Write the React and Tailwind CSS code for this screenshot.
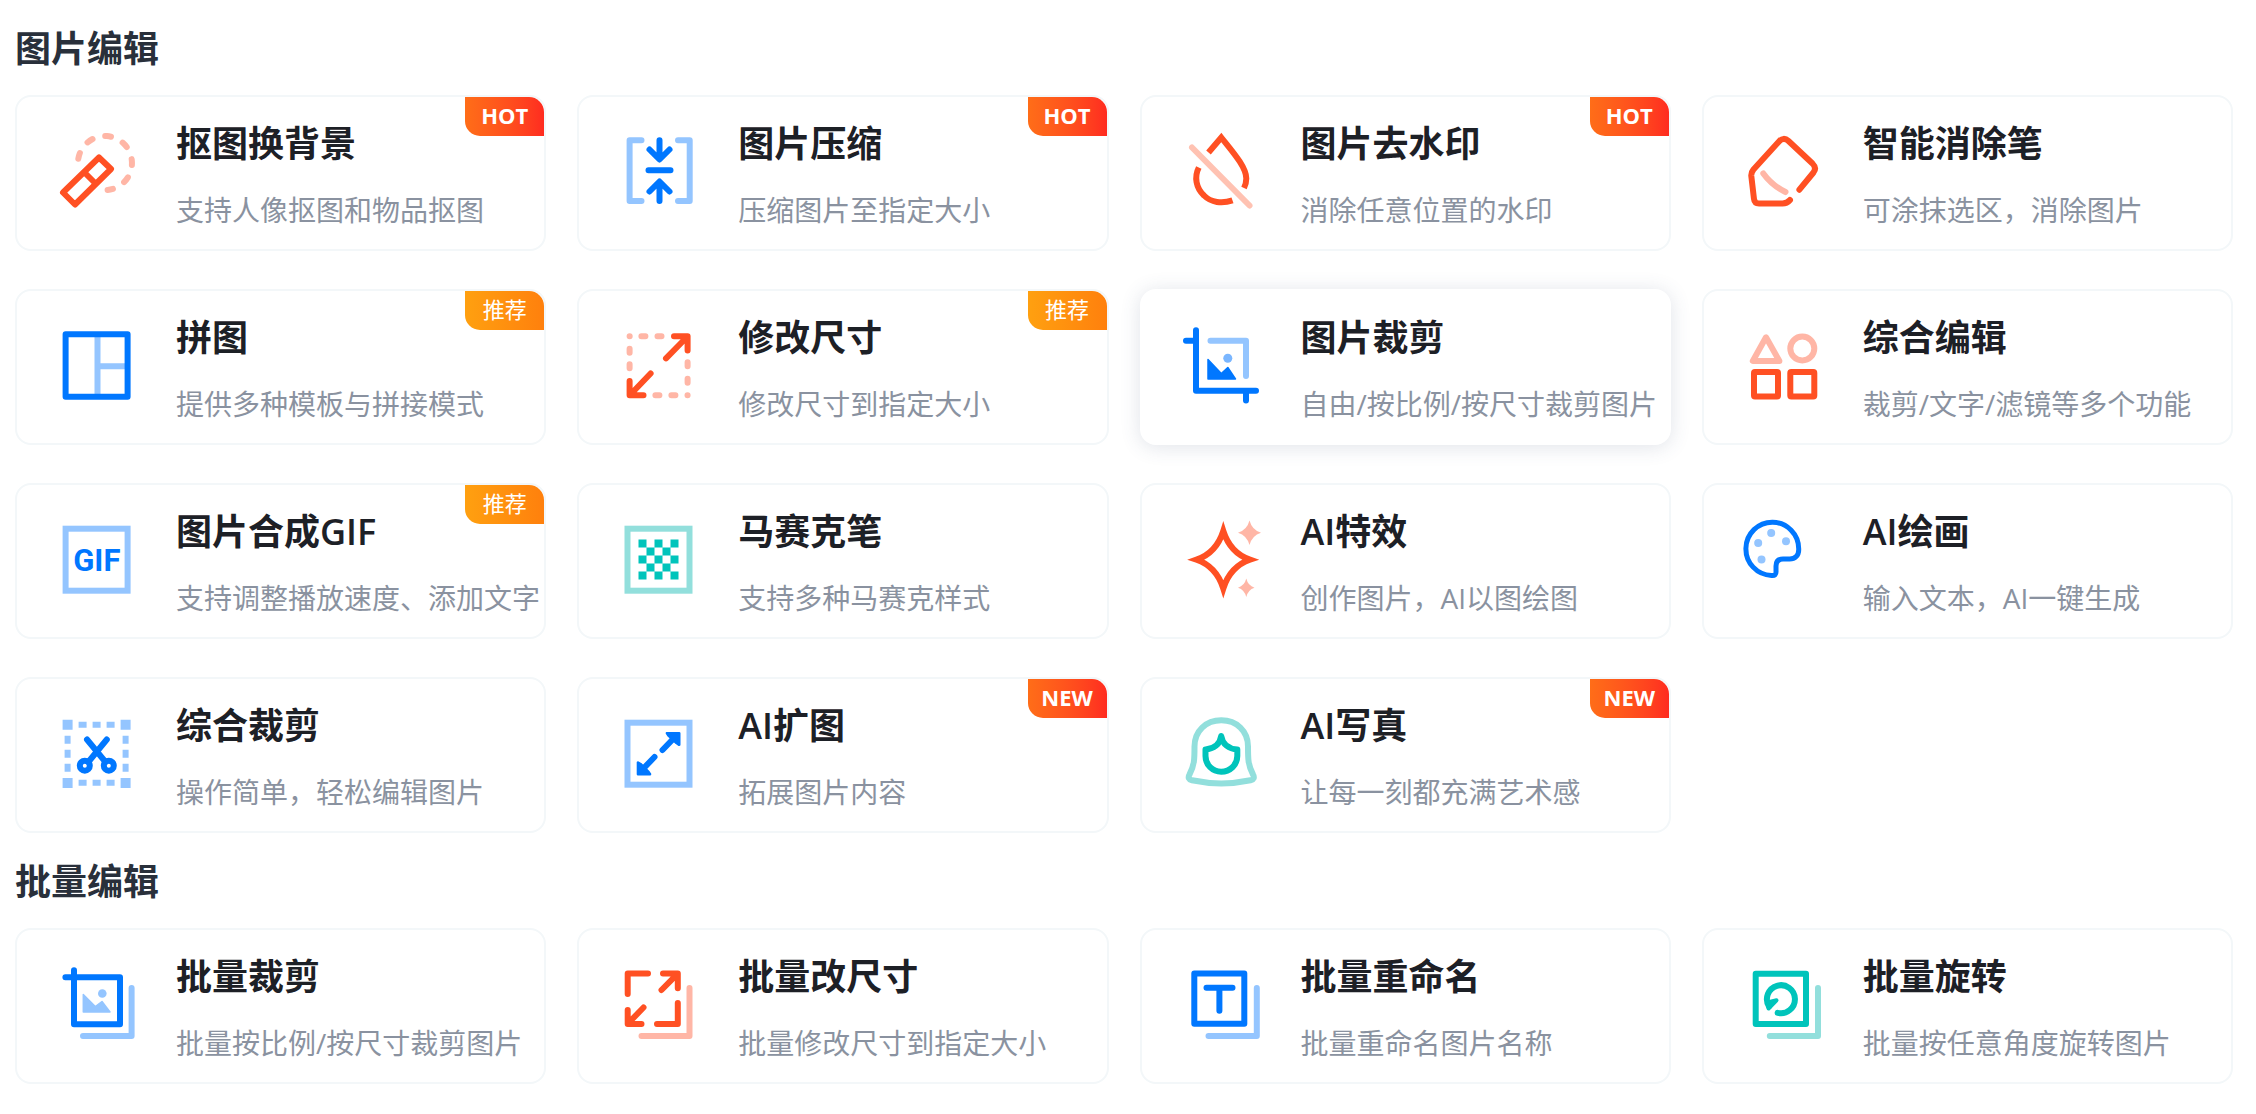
import React from 'react'
import clsx from 'clsx'

const BLUE = '#0077ff'
const BLUE_LIGHT = '#94c5ff'
const RED = '#ff5023'
const RED_LIGHT = '#ffb6a6'
const TEAL = '#00c4bb'
const TEAL_LIGHT = '#92dfdc'

// All icons share an 80x80 canvas and a 6px stroke
const Icon = ({ children, cap = 'round' }) => (
  <svg
    viewBox="0 0 80 80"
    fill="none"
    strokeWidth="6"
    strokeLinecap={cap}
    strokeLinejoin="round"
    aria-hidden="true"
    className="mt-[9px] size-20 shrink-0 overflow-visible"
  >
    {children}
  </svg>
)

const CutoutIcon = () => (
  <Icon>
    <path d="M21.3 27.7A27 27 0 1 1 50.6 58.9" stroke={RED_LIGHT} strokeDasharray="6 13" />
    <path d="M42 26.5L54 38L18 73.5L6 61.5Z" stroke={RED} />
    <path d="M27.5 41.5L38.5 52.5" stroke={RED} />
  </Icon>
)

const CompressIcon = () => (
  <Icon>
    <path d="M22.5 9.3H10.6V70H22.5M59 9.3H70.7V70H59" stroke={BLUE_LIGHT} />
    <path
      d="M40.5 9.3V28M30.5 18.5L40.5 28.5L50.5 18.5M29.5 39.3H51.5M40.5 70V51M30.5 60.5L40.5 50.5L50.5 60.5"
      stroke={BLUE}
    />
  </Icon>
)

const WatermarkIcon = () => (
  <Icon cap="butt">
    <path
      d="M26.5 21.5L39.3 6.5C50 20 64.3 36 64.3 47.5C64.3 51 63.5 54 62 57"
      stroke={RED}
      strokeLinejoin="miter"
    />
    <path d="M16.8 36.5C12 46 14 57 22 64.5C29 71.5 40 73 50.5 69.3" stroke={RED} />
    <path d="M10 16.5L67.5 74.5" stroke={RED} strokeOpacity="0.35" strokeLinecap="round" />
  </Icon>
)

const EraserIcon = () => (
  <Icon>
    <path
      d="M55.4 58.7L69.5 41.5Q73 37 68.5 32.5L44.5 10Q39.5 5.5 35 10.5L9.5 38.5Q7 41.5 7.3 45L10 68Q10.5 72.5 15 72.5H38.5Q43 72.5 46 69"
      stroke={RED}
    />
    <path d="M19.3 42.5Q28 54.5 41.5 61" stroke={RED_LIGHT} />
  </Icon>
)

const CollageIcon = () => (
  <Icon cap="butt">
    <path d="M40.5 12V69M40.5 41.3H69" stroke={BLUE_LIGHT} />
    <rect x="8.6" y="9.3" width="62" height="62.4" stroke={BLUE} />
  </Icon>
)

const ResizeIcon = () => (
  <Icon>
    <path
      d="M10.6 11.3h.1M22.4 11.3h4M38.5 11.3h4M10.6 23.7v4M10.6 39.3v4M68.6 37.3v4M68.6 53.7v4M36.4 70.3h4M52.4 70.3h4M68.5 70.3h.1"
      stroke={RED_LIGHT}
    />
    <path d="M55 11.3H68.6V25.5M68 12L47 33.3M10.6 56V70.3H24.5M11 70L31.6 48.5" stroke={RED} />
  </Icon>
)

const CropIcon = () => (
  <Icon>
    <path d="M28.5 15.7H64V51" stroke={BLUE_LIGHT} />
    <path d="M4 15.7H14M14 5.3V65.7H74M64 65.7V75.5" stroke={BLUE} />
    <path d="M26 34.5L39.3 48.5L45.8 42.5L53.5 54H26Z" fill={BLUE} stroke={BLUE} strokeWidth="1.5" />
    <circle cx="45.8" cy="33.3" r="4.5" fill="#7ab6ff" />
  </Icon>
)

const ShapesIcon = () => (
  <Icon>
    <path d="M22 12.3L8.8 36H35.4Z" stroke={RED_LIGHT} />
    <circle cx="58.3" cy="23.5" r="12" stroke={RED_LIGHT} />
    <rect x="10" y="47" width="24" height="24.5" rx="1" stroke={RED} />
    <rect x="46.3" y="47" width="24" height="24.5" rx="1" stroke={RED} />
  </Icon>
)

const GifIcon = () => (
  <Icon>
    <rect x="8.6" y="9.7" width="62" height="62" stroke={BLUE_LIGHT} strokeLinejoin="miter" />
    <text
      x="39.8"
      y="52"
      textAnchor="middle"
      fill={BLUE}
      className="font-['Roboto',sans-serif] text-[31px] font-bold"
    >
      GIF
    </text>
  </Icon>
)

const MosaicIcon = () => (
  <Icon>
    <rect x="8.5" y="9.7" width="62" height="62" stroke={TEAL_LIGHT} strokeLinejoin="miter" />
    <path
      d="M19.5 20.5h8v8h-8zM35.5 20.5h8v8h-8zM51.5 20.5h8v8h-8zM27.5 28.5h8v8h-8zM43.5 28.5h8v8h-8zM19.5 36.5h8v8h-8zM35.5 36.5h8v8h-8zM51.5 36.5h8v8h-8zM27.5 44.5h8v8h-8zM43.5 44.5h8v8h-8zM19.5 52.5h8v8h-8zM35.5 52.5h8v8h-8zM51.5 52.5h8v8h-8z"
      fill={TEAL}
    />
  </Icon>
)

const SparkleIcon = () => (
  <Icon>
    <path
      d="M41.3 12Q48.3 34 68 40.7Q48.3 47.5 41.3 69.5Q34.3 47.5 14.5 40.7Q34.3 34 41.3 12Z"
      stroke={RED}
      strokeLinejoin="miter"
      strokeMiterlimit="10"
    />
    <path
      d="M67.5 1.5Q70 11 79 13.7Q70 16.5 67.5 26Q65 16.5 56 13.7Q65 11 67.5 1.5ZM64.3 59.5Q66 66.7 72.5 68.7Q66 70.8 64.3 78Q62.5 70.8 56 68.7Q62.5 66.7 64.3 59.5Z"
      fill={RED_LIGHT}
    />
  </Icon>
)

const PaletteIcon = () => (
  <Icon>
    <path
      d="M27.5 56.4A26.4 26.6 0 1 1 54.7 30C55 36.5 51 40.3 45 40H39Q32 40 32 47V52Q32.5 57 27.5 56.4Z"
      stroke={BLUE}
      strokeWidth="5"
    />
    <g fill={BLUE_LIGHT}>
      <circle cx="27.2" cy="14" r="4" />
      <circle cx="42" cy="22.3" r="4" />
      <circle cx="14.2" cy="24" r="4" />
      <circle cx="17.5" cy="40.5" r="4" />
    </g>
  </Icon>
)

const ScissorsIcon = () => (
  <Icon>
    <path
      d="M5.6 6.7h10v10h-10zM63.6 6.7h10v10h-10zM5.6 65h10v10h-10zM63.6 65h10v10h-10zM21.6 8.7h8v6h-8zM35.6 8.7h8v6h-8zM49.6 8.7h8v6h-8zM21.6 66.7h8v6h-8zM35.6 66.7h8v6h-8zM49.6 66.7h8v6h-8zM7.6 22.7h6v8h-6zM7.6 36.7h6v8h-6zM7.6 50.7h6v8h-6zM65.6 22.7h6v8h-6zM65.6 36.7h6v8h-6zM65.6 50.7h6v8h-6z"
      fill={BLUE_LIGHT}
    />
    <path d="M30 26.5L48.5 49M49.8 26.5L31.3 49" stroke={BLUE} />
    <circle cx="27.8" cy="52.7" r="5" stroke={BLUE} />
    <circle cx="51.8" cy="52.7" r="5" stroke={BLUE} />
  </Icon>
)

const ExpandIcon = () => (
  <Icon>
    <rect x="8.5" y="9.7" width="62" height="62" stroke={BLUE_LIGHT} strokeLinejoin="miter" />
    <path d="M43.5 37L56 24M35.5 44L23 57" stroke={BLUE} />
    <path
      d="M48 20.2H60.2V31.8L57.5 30L49.5 22.5ZM19 49.5V61.3H31L29.5 59L21.5 51Z"
      fill={BLUE}
      stroke={BLUE}
      strokeWidth="2.6"
    />
  </Icon>
)

const PortraitIcon = () => (
  <Icon>
    <path
      d="M12.5 33.5C12.5 18 24 7.3 39.3 7.3S66 18 66 33.5C66 46 66 52 71 61.5Q73.5 66 68.5 67.3Q39.3 73.5 10 67.3Q5 66 7.5 61.5C12.5 52 12.5 46 12.5 33.5Z"
      stroke={TEAL_LIGHT}
    />
    <path
      d="M39.2 23C38 31.5 31.5 36 23.5 36.5V43C23.5 52 30.5 58.7 39.2 58.7S55.3 52 55.3 43V36.5C47 36 40.5 31.5 39.2 23Z"
      stroke={TEAL}
    />
  </Icon>
)

const BatchCropIcon = () => (
  <Icon>
    <path d="M74.6 24V72H26" stroke={BLUE_LIGHT} />
    <path d="M8.4 13.3H63V60.3H17V6.3" stroke={BLUE} />
    <path d="M26.3 30.5L38.3 42.5L45 37.5L53 48H26.3Z" fill={BLUE_LIGHT} stroke={BLUE_LIGHT} strokeWidth="1.5" />
    <circle cx="45.3" cy="29.5" r="4.3" fill={BLUE_LIGHT} />
  </Icon>
)

const BatchResizeIcon = () => (
  <Icon>
    <path d="M70.5 24V72H22.5" stroke={RED_LIGHT} />
    <path
      d="M8.7 30V9.5H29M44 9.5H58.8V24.3M58 10.3L42.5 26M8.7 46V60H22.5M9.5 59L24.5 43.5M38 60H58.8V39"
      stroke={RED}
    />
  </Icon>
)

const BatchRenameIcon = () => (
  <Icon>
    <path d="M74.8 24V72H26.5" stroke={BLUE_LIGHT} />
    <rect x="12.3" y="9.5" width="50" height="50.3" stroke={BLUE} />
    <path d="M24.5 23.7H50.5M37.4 23.7V46.7" stroke={BLUE} />
  </Icon>
)

const BatchRotateIcon = () => (
  <Icon>
    <path d="M74 24V72H25.8" stroke={TEAL_LIGHT} />
    <rect x="11.7" y="9.7" width="50.3" height="50.3" stroke={TEAL} />
    <path d="M25 42.5A14 14 0 1 1 33.7 48.8" stroke={TEAL} />
    <path d="M24.5 44.5L32.5 36.3L23.5 38.5Z" fill={TEAL} stroke={TEAL} strokeWidth="4" />
  </Icon>
)

const sections = [
  {
    title: '图片编辑',
    tools: [
      { name: '抠图换背景', desc: '支持人像抠图和物品抠图', icon: CutoutIcon, tag: 'HOT' },
      { name: '图片压缩', desc: '压缩图片至指定大小', icon: CompressIcon, tag: 'HOT' },
      { name: '图片去水印', desc: '消除任意位置的水印', icon: WatermarkIcon, tag: 'HOT' },
      { name: '智能消除笔', desc: '可涂抹选区，消除图片', icon: EraserIcon },
      { name: '拼图', desc: '提供多种模板与拼接模式', icon: CollageIcon, tag: '推荐' },
      { name: '修改尺寸', desc: '修改尺寸到指定大小', icon: ResizeIcon, tag: '推荐' },
      { name: '图片裁剪', desc: '自由/按比例/按尺寸裁剪图片', icon: CropIcon, active: true },
      { name: '综合编辑', desc: '裁剪/文字/滤镜等多个功能', icon: ShapesIcon },
      { name: '图片合成GIF', desc: '支持调整播放速度、添加文字', icon: GifIcon, tag: '推荐' },
      { name: '马赛克笔', desc: '支持多种马赛克样式', icon: MosaicIcon },
      { name: 'AI特效', desc: '创作图片，AI以图绘图', icon: SparkleIcon },
      { name: 'AI绘画', desc: '输入文本，AI一键生成', icon: PaletteIcon },
      { name: '综合裁剪', desc: '操作简单，轻松编辑图片', icon: ScissorsIcon },
      { name: 'AI扩图', desc: '拓展图片内容', icon: ExpandIcon, tag: 'NEW' },
      { name: 'AI写真', desc: '让每一刻都充满艺术感', icon: PortraitIcon, tag: 'NEW' },
    ],
  },
  {
    title: '批量编辑',
    tools: [
      { name: '批量裁剪', desc: '批量按比例/按尺寸裁剪图片', icon: BatchCropIcon },
      { name: '批量改尺寸', desc: '批量修改尺寸到指定大小', icon: BatchResizeIcon },
      { name: '批量重命名', desc: '批量重命名图片名称', icon: BatchRenameIcon },
      { name: '批量旋转', desc: '批量按任意角度旋转图片', icon: BatchRotateIcon },
    ],
  },
]

const Tag = ({ text }) => (
  <span
    className={clsx(
      'absolute top-0 right-0 flex h-[39px] w-[79px] items-center justify-center rounded-tr-[15px] rounded-bl-[15px] bg-linear-to-r pb-0.5 text-[22px] text-white',
      text === '推荐' ? 'from-[#ffa010] to-[#ff800d]' : 'from-[#ff6d18] to-[#ff2b20] font-bold'
    )}
  >
    {text}
  </span>
)

const ToolCard = ({ tool }) => {
  const ToolIcon = tool.icon
  return (
    <a
      href="#"
      className={clsx(
        'relative flex h-[156px] items-start gap-[39px] rounded-2xl border-2 bg-white pt-[25px] pl-10 whitespace-nowrap',
        tool.active ? 'border-white shadow-[0_2px_20px_rgba(60,80,120,0.16)]' : 'border-[#f3f7f9]'
      )}
    >
      <ToolIcon />
      <div className="flex flex-col gap-[26px]">
        <h3 className="text-[36px] leading-[44px] font-semibold text-[#1d2026]">{tool.name}</h3>
        <p className="text-[28px] leading-9 text-[#8a92a0]">{tool.desc}</p>
      </div>
      {tool.tag && <Tag text={tool.tag} />}
    </a>
  )
}

const App = () => {
  return (
    <main className="bg-white pr-[23px] pb-8 pl-[15px] font-['Open_Sans','Noto_Sans_CJK_SC',sans-serif]">
      {sections.map((section) => (
        <section key={section.title}>
          <h2 className="flex h-[95px] items-center pt-0.5 text-[36px] font-semibold text-[#29303b]">
            {section.title}
          </h2>
          <div className="grid grid-cols-4 gap-x-[31px] gap-y-[38px]">
            {section.tools.map((tool) => (
              <ToolCard key={tool.name} tool={tool} />
            ))}
          </div>
        </section>
      ))}
    </main>
  )
}

export default App
